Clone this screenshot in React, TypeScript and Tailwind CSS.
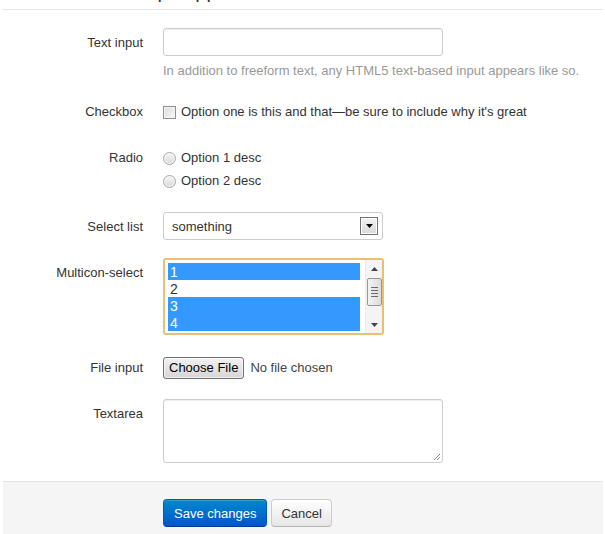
import React from "react";

function Label({ children }: { children: React.ReactNode }) {
  return (
    <div className="w-[140px] shrink-0 text-right pt-[6px] mr-[20px] leading-[18px]">{children}</div>
  );
}

function Radio({ label, first, last }: { label: string; first?: boolean; last?: boolean }) {
  return (
    <div className={`flex items-center h-[18px] ${first ? "mt-[6px]" : "mt-[5px]"} ${last ? "mb-[4px]" : ""}`}>
      <span className="w-[13px] h-[13px] rounded-full border border-[#a6a6a6] bg-gradient-to-b from-[#f6f6f6] to-[#d9d9d9] shadow-[inset_0_0_0_1px_rgba(255,255,255,0.7)]" />
      <span className="ml-[5px]">{label}</span>
    </div>
  );
}

export default function App() {
  const items = [
    { v: "1", sel: true },
    { v: "2", sel: false },
    { v: "3", sel: true },
    { v: "4", sel: true },
  ];
  return (
    <div className="w-[605px] h-[534px] overflow-hidden bg-white text-[13px] leading-[18px] text-[#333] font-['Liberation_Sans',Arial,sans-serif]">
      <div className="ml-[3px] w-[600px]">
        {/* legend (cut off at top) */}
        <div className="h-[10px] border-b border-[#e5e5e5] overflow-hidden">
          <div className="-mt-[19px] text-[20px] leading-[20px] text-[#333] whitespace-nowrap">
            Controls Bootstrap supports
          </div>
        </div>

        {/* Text input */}
        <div className="flex mt-[18px]">
          <Label>Text input</Label>
          <div>
            <div className="w-[280px] h-[28px] border border-[#cccccc] rounded-[3px] bg-white shadow-[inset_0_1px_1px_rgba(0,0,0,0.075)]" />
            <p className="mt-[6px] mb-[-1px] text-[#999] leading-[18px]">
              In addition to freeform text, any HTML5 text-based input appears like so.
            </p>
          </div>
        </div>

        {/* Checkbox */}
        <div className="flex mt-[18px]">
          <Label>Checkbox</Label>
          <div className="pt-[6px] pb-[4px]">
            <div className="flex items-center h-[18px]">
              <span className="w-[13px] h-[13px] border border-[#8f8f8f] bg-gradient-to-br from-[#dcdcdc] to-[#f8f8f8] shadow-[inset_0_0_0_1px_#f4f4f4]" />
              <span className="ml-[5px] whitespace-nowrap">
                Option one is this and that—be sure to include why it's great
              </span>
            </div>
          </div>
        </div>

        {/* Radio */}
        <div className="flex mt-[18px]">
          <Label>Radio</Label>
          <div>
            <Radio label="Option 1 desc" first />
            <Radio label="Option 2 desc" last />
          </div>
        </div>

        {/* Select list */}
        <div className="flex mt-[18px]">
          <Label>Select list</Label>
          <div className="relative w-[220px] h-[28px] border border-[#cccccc] rounded-[3px] bg-white flex items-center pl-[8px] pt-[2px]">
            <span>something</span>
            <div className="absolute right-[4px] top-[4px] w-[18px] h-[18px] border border-[#707070] bg-gradient-to-b from-[#f2f2f2] to-[#d8d8d8] flex items-center justify-center shadow-[inset_0_0_0_1px_#fff]">
              <svg width="7" height="4" viewBox="0 0 7 4">
                <path d="M0 0H7L3.5 4Z" fill="#000" />
              </svg>
            </div>
          </div>
        </div>

        {/* Multi select */}
        <div className="flex mt-[18px]">
          <Label>Multicon-select</Label>
          <div className="w-[221px] h-[77px] border-2 border-[#e9bf74] rounded-[3px] bg-white flex overflow-hidden">
            <div className="flex-1 pt-[3px] pl-[3px] pr-[5px] text-[14px]">
              {items.map((it) => (
                <div
                  key={it.v}
                  className={`h-[17px] leading-[19px] overflow-hidden pl-[2px] ${it.sel ? "bg-[#3399ff] text-white" : "text-[#333]"}`}
                >
                  {it.v}
                </div>
              ))}
            </div>
            <div className="w-[17px] h-full bg-[#f4f4f4] border-l border-[#ececec] flex flex-col items-center">
              <div className="h-[17px] w-full flex items-center justify-center">
                <svg width="7" height="4" viewBox="0 0 7 4">
                  <path d="M3.5 0L7 4H0Z" fill="#444" />
                </svg>
              </div>
              <div className="w-[15px] h-[28px] mt-[1px] rounded-[2px] border border-[#979797] bg-gradient-to-r from-[#f3f3f3] to-[#dcdcdc] flex flex-col items-center justify-center gap-[2px]">
                <span className="w-[7px] h-[1px] bg-[#6a6a6a]" />
                <span className="w-[7px] h-[1px] bg-[#6a6a6a]" />
                <span className="w-[7px] h-[1px] bg-[#6a6a6a]" />
                <span className="w-[7px] h-[1px] bg-[#6a6a6a]" />
              </div>
              <div className="flex-1" />
              <div className="h-[17px] w-full flex items-center justify-center">
                <svg width="7" height="4" viewBox="0 0 7 4">
                  <path d="M0 0H7L3.5 4Z" fill="#444" />
                </svg>
              </div>
            </div>
          </div>
        </div>

        {/* File input */}
        <div className="flex mt-[18px]">
          <Label>File input</Label>
          <div className="h-[28px] flex items-center pt-[1px]">
            <div className="h-[22px] px-[5px] border border-[#707070] rounded-[3px] bg-gradient-to-b from-[#f2f2f2] to-[#d6d6d6] flex items-center pt-[1px] text-black text-[13px] shadow-[inset_0_0_0_1px_rgba(255,255,255,0.6)]">
              Choose File
            </div>
            <span className="ml-[6px] pt-[1px] text-[13px] text-[#444]">No file chosen</span>
          </div>
        </div>

        {/* Textarea */}
        <div className="flex mt-[18px]">
          <Label>Textarea</Label>
          <div className="relative w-[280px] h-[64px] border border-[#cccccc] rounded-[3px] bg-white shadow-[inset_0_1px_1px_rgba(0,0,0,0.075)]">
            <svg className="absolute right-[1px] bottom-[1px]" width="8" height="8" viewBox="0 0 8 8">
              <path d="M7 1L1 7M7 4L4 7" stroke="#888" strokeWidth="1" />
            </svg>
          </div>
        </div>

        {/* Form actions */}
        <div className="mt-[18px] border-t border-[#e5e5e5] bg-[#f5f5f5] pt-[17px] pb-[18px] pl-[160px] flex h-[80px]">
          <div className="h-[28px] px-[10px] pt-[2px] flex items-center rounded-[4px] border border-[#0055cc] border-b-[#003d99] bg-gradient-to-b from-[#0088cc] to-[#0055cc] text-white text-[13px] shadow-[inset_0_1px_0_rgba(255,255,255,0.2)]">
            Save changes
          </div>
          <div className="ml-[4px] h-[28px] px-[9px] pt-[2px] flex items-center rounded-[4px] border border-[#cccccc] border-b-[#b3b3b3] bg-gradient-to-b from-white to-[#e6e6e6] text-[#333] text-[13px] shadow-[inset_0_1px_0_rgba(255,255,255,0.2)]">
            Cancel
          </div>
        </div>
      </div>
    </div>
  );
}
